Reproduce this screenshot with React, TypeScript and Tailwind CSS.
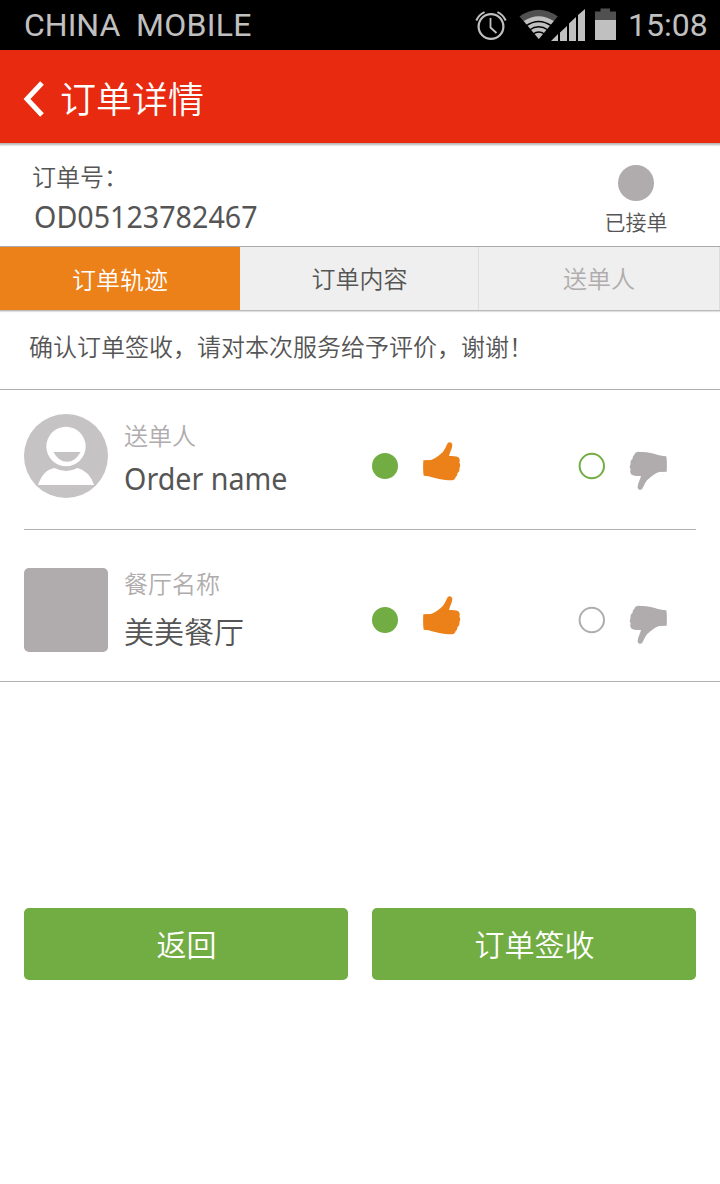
import type { ReactNode } from 'react';

const cjk = "font-['Noto_Sans_CJK_SC',sans-serif] font-[350]";
const latin = "font-['Noto_Sans','Noto_Sans_CJK_SC',sans-serif]";

function StatusBar() {
  return (
    <div className="flex h-[50px] items-center bg-black pl-6 pr-3 font-['Roboto',sans-serif] font-normal text-[#c0c0c0]">
      <span className="whitespace-pre text-[32px] leading-[52px]">
        <span className="inline-block w-[112px]">CHINA</span>
        <span className="tracking-[0.3px]">MOBILE</span>
      </span>
      <svg className="ml-auto h-[50px] w-[150px] shrink-0" viewBox="470 0 150 50" fill="none">
        <circle cx="491" cy="26.5" r="12.4" stroke="#c0c0c0" strokeWidth="2.2" />
        <path d="M490.5 18V27.5L496.500 33" stroke="#c0c0c0" strokeWidth="1.800" />
        <path d="M476.300 20.500Q479 14.500 484.600 12.100M505.700 20.500Q503 14.500 497.400 12.100" stroke="#c0c0c0" strokeWidth="2" />
        <path d="M519.500 16.500Q538.500 3 557.800 16.500L538.800 39Z" fill="#505050" />
        <path d="M523.800 21Q538.500 11.500 553.800 21L538.800 39Z" fill="#c0c0c0" />
        <path d="M526 25.800Q538.700 17 551.500 25.800M529.500 30Q538.700 23.600 548 30M533 34Q538.700 30 544.500 34" stroke="#000" strokeWidth="1.500" />
        <path d="M551 41L558 34V41ZM560 41V32.500L567 26V41ZM569 41V23.500L576 17V41ZM578 41V15L585 9V41Z" fill="#c0c0c0" />
        <path d="M595 20V11.500H600.500V8.500H610V11.500H616V20Z" fill="#505050" />
        <path d="M595 20H616V40H595Z" fill="#c0c0c0" />
      </svg>
      <span className="ml-[8px] w-[80px] whitespace-nowrap text-[32px] leading-[52px]">15:08</span>
    </div>
  );
}

function Thumb({ down = false }: { down?: boolean }) {
  return (
    <svg
      viewBox="186 30 120 126"
      className={down ? 'h-[42px] w-10 rotate-180 fill-[#b0acad]' : 'h-[42px] w-10 fill-[#ec8019]'}
    >
      <path d="M190 91L212 90C224 87 240 74 249 65C256 57 259 46 263 40C268 33 278 38 277 46C276 57 270 66 267 78C277 78 288 78 295 82C300 86 300 93 298 98C302 102 301 110 298 114C300 120 297 127 292 130C293 135 290 139 287 141C286 147 282 150 276 151C262 151 240 149 225 144C212 140 205 138 191 137C189 125 189 105 190 91Z" />
    </svg>
  );
}

function Avatar() {
  return (
    <svg className="h-[84px] w-[84px]" viewBox="0 0 84 84">
      <circle cx="42" cy="42" r="42" fill="#c5c3c4" />
      <circle cx="42" cy="32.500" r="19.700" fill="#fff" />
      <path d="M29.500 38H56.500Q51.500 47.800 43 47.800Q34.500 47.800 29.500 38Z" fill="#c5c3c4" />
      <path d="M14 71Q19 56 30.500 54Q42 60 53.500 54Q65.500 57 70 71Z" fill="#fff" />
    </svg>
  );
}

function Rating({ off }: { off: 'green' | 'gray' }) {
  return (
    <div className="flex items-start">
      <span className="mt-[13px] size-[26px] rounded-full bg-[#72ad43]" />
      <span className="ml-6">
        <Thumb />
      </span>
      <svg
        className={
          off === 'green'
            ? 'ml-[116px] mt-[12px] size-7 stroke-[#72ad43]'
            : 'ml-[116px] mt-[12px] size-7 stroke-[#b0acad]'
        }
        viewBox="0 0 28 28"
        fill="none"
        strokeWidth="2"
      >
        <circle cx="13.800" cy="14" r="12.200" />
      </svg>
      <span className="ml-[22px] mt-[10px]">
        <Thumb down />
      </span>
    </div>
  );
}

function Row({ picture, label, name, off, className }: {
  picture: ReactNode;
  label: ReactNode;
  name: ReactNode;
  off: 'green' | 'gray';
  className: string;
}) {
  return (
    <div className={`flex items-start ${className}`}>
      <div className="w-[84px] shrink-0">{picture}</div>
      <div className="ml-4 w-[248px] shrink-0 whitespace-nowrap">
        {label}
        {name}
      </div>
      <div className="mt-[26px]">
        <Rating off={off} />
      </div>
    </div>
  );
}

export default function App() {
  return (
    <div className={`h-[1184px] w-[720px] overflow-hidden bg-white text-[#555] ${cjk}`}>
      <StatusBar />
      <header className="relative flex h-[93px] items-center bg-[#e82a11] pl-[23px] text-white shadow-[0_1px_2px_1px_rgba(0,0,0,0.3)]">
        <svg className="mt-1 h-9 w-[22px]" viewBox="0 0 22 36" fill="none" stroke="#fff" strokeWidth="5">
          <path d="M19 2L4 18L19 34" />
        </svg>
        <h1 className="ml-[15px] text-[36px] font-[350] leading-[94px]">订单详情</h1>
      </header>

      <section className="flex h-[104px] justify-between border-b border-[#aaa]">
        <div className="pl-8 pt-[17px]">
          <div className="text-[24px] leading-[32px]">订单号：</div>
          <div className={`ml-[2px] mt-[4px] origin-left scale-x-[0.955] text-[30px] font-normal leading-[42px] ${latin}`}>OD05123782467</div>
        </div>
        <div className="mr-[52.5px] flex flex-col items-center pt-[22px]">
          <span className="size-9 rounded-full bg-[#b0acad]" />
          <span className="mt-[5px] text-[21px] leading-[30px]">已接单</span>
        </div>
      </section>

      <nav className="flex h-[64px] border-b border-[#bbb] bg-[#efefef] text-center text-[24px] leading-[62px] shadow-[0_1px_1px_rgba(0,0,0,0.12)]">
        <span className="w-[240px] bg-[#ec8019] leading-[63px] text-white">订单轨迹</span>
        <span className="w-[239px] border-r border-[#ddd] pl-px">订单内容</span>
        <span className="w-[241px] border-r border-[#ddd] text-[#b0acad]">送单人</span>
      </nav>

      <p className="h-[79px] border-b border-[#b0b0b0] pl-[29px] text-[24px] leading-[70px]">
        确认订单签收，请对本次服务给予评价，谢谢！
      </p>

      <section className="border-b border-[#b0b0b0] px-6">
        <Row
          className="h-[140px] border-b border-[#b0b0b0] pt-6"
          picture={<Avatar />}
          label={<div className="text-[24px] leading-[42px] text-[#b0acad]">送单人</div>}
          off="green"
          name={<div className={`origin-left scale-x-[0.955] text-[30px] font-normal leading-[46px] ${latin}`}>Order name</div>}
        />
        <Row
          className="h-[151px] pt-[38px]"
          picture={<div className="size-[84px] rounded-[5px] bg-[#b0acad]" />}
          label={<div className="text-[24px] leading-[29px] text-[#b0acad]">餐厅名称</div>}
          off="gray"
          name={<div className="text-[30px] leading-[66px]">美美餐厅</div>}
        />
      </section>

      <div className="mt-[226px] grid grid-cols-2 gap-6 px-6">
        <button className="h-[72px] rounded-[5px] bg-[#72ad43] pb-[2px] pl-px text-[30px] text-white">返回</button>
        <button className="h-[72px] rounded-[5px] bg-[#72ad43] pb-[2px] pl-px text-[30px] text-white">订单签收</button>
      </div>
    </div>
  );
}
